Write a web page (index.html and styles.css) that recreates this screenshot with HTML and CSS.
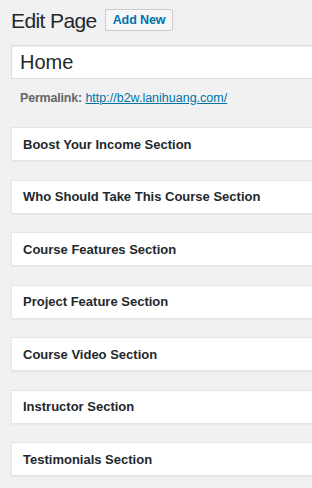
FILE: index.html
```html
<!DOCTYPE html>
<html>
<head>
    <title>Edit Page</title>
    <link rel="stylesheet" href="styles.css">
</head>
<body>
    <div class="wrap">
        <div class="pagehead">
            <h1>Edit Page</h1>
            <a href="#" class="addnew">Add New</a>
        </div>

        <!-- title + permalink -->
        <div class="titlewrap">
            <input type="text" id="title" value="Home">
        </div>
        <div class="permalink">
            <strong>Permalink:</strong> <a href="#">http://b2w.lanihuang.com/</a>
        </div>

        <div class="boxes">
            <div class="postbox"><h2>Boost Your Income Section</h2></div>
            <div class="postbox"><h2>Who Should Take This Course Section</h2></div>
            <div class="postbox"><h2>Course Features Section</h2></div>
            <div class="postbox"><h2>Project Feature Section</h2></div>
            <div class="postbox"><h2>Course Video Section</h2></div>
            <div class="postbox"><h2>Instructor Section</h2></div>
            <div class="postbox"><h2>Testimonials Section</h2></div>
        </div>
    </div>
</body>
</html>
```

FILE: styles.css
```css
html, body{
    margin: 0;
    overflow: hidden;
}
body{
    background: #f1f1f1;
    color: #23282d;
    font-family: "Liberation Sans", Arial, sans-serif;
    font-size: 13px;
}
.wrap{
    width: 420px;
    padding: 9px 0 0 11px;
}
.pagehead{
    display: flex;
    align-items: center;
    gap: 8px;
    height: 24px;
}
h1{
    margin: 0;
    font-size: 21px;
    font-weight: 400;
    line-height: 24px;
    letter-spacing: -0.6px;
}
.addnew{
    display: inline-block;
    height: 20px;
    line-height: 20px;
    padding: 0 7px;
    border: 1px solid #ccc;
    border-radius: 2px;
    background: #f7f7f7;
    color: #0073aa;
    font-weight: 700;
    font-size: 12.5px;
    letter-spacing: -0.1px;
    text-decoration: none;
    margin-top: -2px;
}
.titlewrap{
    margin-top: 12px;
}
#title{
    box-sizing: border-box;
    width: 100%;
    height: 34px;
    padding: 0 8px;
    border: 1px solid #ddd;
    background: #fff;
    font-family: "Liberation Sans", Arial, sans-serif;
    font-size: 20px;
    color: #23282d;
    outline: none;
    box-shadow: inset 0 1px 2px rgba(0,0,0,0.07);
}
.permalink{
    padding: 10px 0 0 9px;
    line-height: 18px;
    color: #666;
    font-size: 12.5px;
}
.permalink strong{
    letter-spacing: -0.2px;
}
.permalink a{
    color: #0073aa;
    font-weight: 400;
}
.boxes{
    margin-top: 20px;
}
.postbox{
    box-sizing: border-box;
    height: 34px;
    margin-bottom: 18.5px;
    background: #fff;
    border: 1px solid #e5e5e5;
    box-shadow: 0 1px 1px rgba(0,0,0,0.04);
    display: flex;
    align-items: center;
    padding-left: 11px;
}
.postbox h2{
    margin: 0;
    font-size: 13px;
    font-weight: 700;
    line-height: 1;
}
```
